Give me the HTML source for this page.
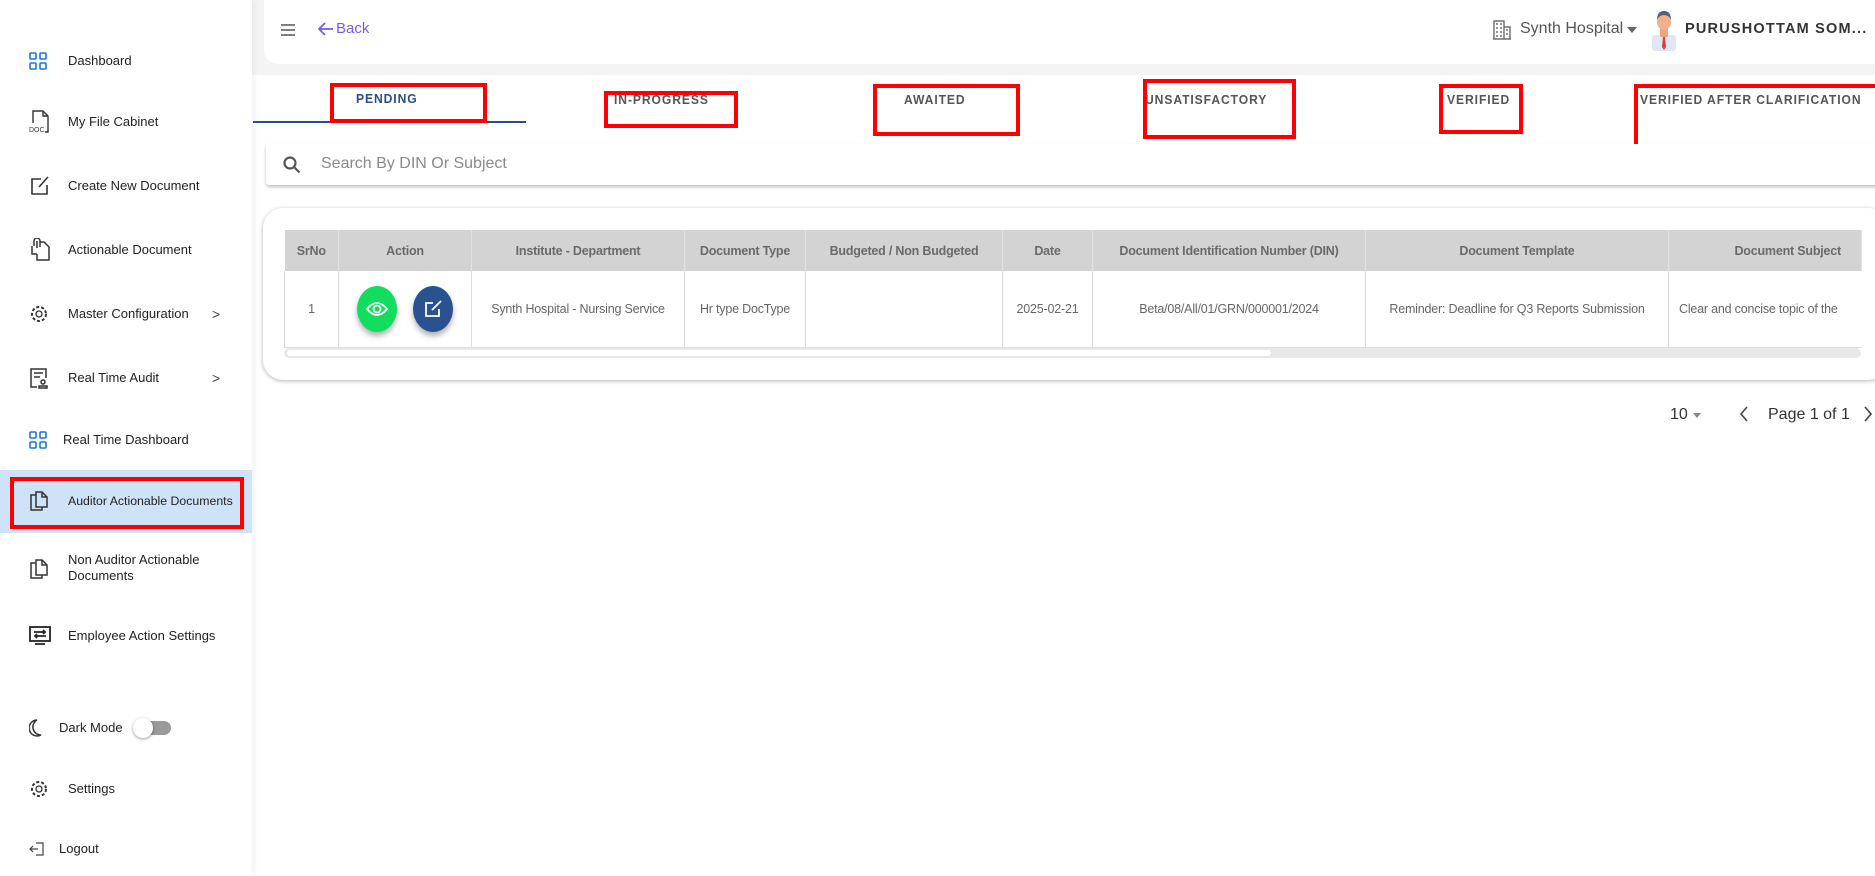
<!DOCTYPE html>
<html><head><meta charset="utf-8">
<style>
*{box-sizing:border-box;margin:0;padding:0}
html,body{width:1875px;height:876px;overflow:hidden;background:#fff;font-family:"Liberation Sans",sans-serif}
.abs{position:absolute}
#sb{left:0;top:0;width:252px;height:876px;background:#fff;box-shadow:2px 0 6px rgba(0,0,0,.06);z-index:2}
.it{position:absolute;left:0;width:252px;font-size:13px;color:#222;display:flex;align-items:center}
.it svg{position:absolute;left:29px}
.it span{position:absolute;left:68px;line-height:16px}
.chev{position:absolute;left:212px;color:#444;font-size:14px}
#top{left:252px;top:0;width:1623px;height:75px;background:#f4f4f4}
#topc{left:264px;top:0;width:1611px;height:64px;background:#fff;border-radius:0 0 0 14px}
.tab{position:absolute;top:91px;font-size:13px;letter-spacing:1px;color:#555;white-space:nowrap;font-weight:bold;transform:scaleX(.93);transform-origin:left}
.rb{position:absolute;border:4px solid #f00}
th{background:#d3d3d3;color:#6a6a6a;font-weight:bold;font-size:12.5px;letter-spacing:-.2px;height:41px;border-right:1px solid #e2e2e2;white-space:nowrap}
td{font-size:12.5px;letter-spacing:-.2px;color:#666;text-align:center;height:76px;border-right:1px solid #ddd;border-bottom:1px solid #ddd;white-space:nowrap;overflow:hidden}
table{border-collapse:collapse;table-layout:fixed}
</style></head><body>
<div id="sb" class="abs">
 <div class="it" style="top:52px;height:18px"><svg width="18" height="18" viewBox="0 0 18 18" fill="none" stroke="#1a73e8" stroke-width="1.6"><rect x="1" y="1" width="6" height="6" rx="1"/><rect x="11" y="1" width="6" height="6" rx="1"/><rect x="1" y="11" width="6" height="6" rx="1"/><rect x="11" y="11" width="6" height="6" rx="1"/></svg><span>Dashboard</span></div>
 <div class="it" style="top:110px;height:24px"><svg width="22" height="26" viewBox="0 0 22 26" fill="none" stroke="#333" stroke-width="1.4"><path d="M4 14V2h10l5 5v16h-3M14 2v5h5"/><text x="0" y="23" font-size="7" fill="#333" stroke="none" font-family="Liberation Sans">DOC</text></svg><span>My File Cabinet</span></div>
 <div class="it" style="top:175px;height:22px"><svg width="22" height="22" viewBox="0 0 22 22" fill="none" stroke="#333" stroke-width="1.6"><path d="M12 4H3v15h15v-9M10 12l9-10"/></svg><span>Create New Document</span></div>
 <div class="it" style="top:239px;height:22px"><svg width="22" height="24" viewBox="0 0 22 24" fill="none" stroke="#333" stroke-width="1.5"><path d="M5 8V3a3 3 0 0 1 6 0v6M8 3v7M11 4h4l5 5v13H8v-6M3 8v8h5"/></svg><span>Actionable Document</span></div>
 <div class="it" style="top:303px;height:22px"><svg width="20" height="20" viewBox="0 0 20 20" fill="none" stroke="#333" stroke-width="1.3"><circle cx="10" cy="10" r="3"/><circle cx="10" cy="10" r="7" stroke-dasharray="3 2" stroke-width="2"/></svg><span>Master Configuration</span><b class="chev" style="font-weight:normal">&gt;</b></div>
 <div class="it" style="top:367px;height:22px"><svg width="20" height="22" viewBox="0 0 20 22" fill="none" stroke="#333" stroke-width="1.5"><path d="M8 20H2V2h15v9M5 6h9M5 10h6"/><circle cx="14" cy="15" r="2"/><path d="M10 21h8v-2h-8z"/></svg><span>Real Time Audit</span><b class="chev" style="font-weight:normal">&gt;</b></div>
 <div class="it" style="top:431px;height:18px"><svg width="18" height="18" viewBox="0 0 18 18" fill="none" stroke="#1a73e8" stroke-width="1.6"><rect x="1" y="1" width="6" height="6" rx="1"/><rect x="11" y="1" width="6" height="6" rx="1"/><rect x="1" y="11" width="6" height="6" rx="1"/><rect x="11" y="11" width="6" height="6" rx="1"/></svg><span style="left:63px">Real Time Dashboard</span></div>
 <div class="abs" style="left:0;top:470px;width:252px;height:63px;background:#cfe3f8"></div>
 <div class="rb" style="left:10px;top:477px;width:234px;height:52px"></div>
 <div class="it" style="top:490px;height:22px"><svg width="20" height="22" viewBox="0 0 20 22" fill="none" stroke="#333" stroke-width="1.5"><path d="M7 5H2v15h11v-3M7 2h6l5 5v10H7zM13 2v5h5"/></svg><span style="font-size:12.3px">Auditor Actionable Documents</span></div>
 <div class="it" style="top:558px;height:22px"><svg width="20" height="22" viewBox="0 0 20 22" fill="none" stroke="#333" stroke-width="1.5"><path d="M7 5H2v15h11v-3M7 2h6l5 5v10H7zM13 2v5h5"/></svg><span style="top:-6px">Non Auditor Actionable<br>Documents</span></div>
 <div class="it" style="top:626px;height:20px"><svg width="22" height="20" viewBox="0 0 22 20" fill="none" stroke="#222" stroke-width="1.8"><rect x="1" y="1" width="20" height="14"/><path d="M6 18h10M5 6h10M17 10H7M14 4l2 2-2 2M8 8l-2 2 2 2"/></svg><span>Employee Action Settings</span></div>
 <div class="it" style="top:718px;height:20px"><svg width="18" height="20" viewBox="0 0 18 20" fill="none" stroke="#333" stroke-width="1.5"><path d="M14 17A8 8 0 0 1 10 2a8 8 0 1 0 4 15z" transform="translate(-2 0)"/></svg><span style="left:59px">Dark Mode</span>
  <div class="abs" style="left:136px;top:3px;width:35px;height:14px;border-radius:7px;background:#9a9a9a"></div>
  <div class="abs" style="left:133px;top:0;width:20px;height:20px;border-radius:50%;background:#fff;box-shadow:0 1px 3px rgba(0,0,0,.4)"></div></div>
 <div class="it" style="top:779px;height:20px"><svg width="20" height="20" viewBox="0 0 20 20" fill="none" stroke="#333" stroke-width="1.3"><circle cx="10" cy="10" r="3"/><circle cx="10" cy="10" r="7" stroke-dasharray="3 2" stroke-width="2"/></svg><span>Settings</span></div>
 <div class="it" style="top:840px;height:18px"><svg width="16" height="16" viewBox="0 0 16 16" fill="none" stroke="#444" stroke-width="1.2"><path d="M7 2h7v12H7M9 8H1M4 5L1 8l3 3"/></svg><span style="left:59px">Logout</span></div>
</div>

<div id="top" class="abs"></div>
<div id="topc" class="abs"></div>
<svg class="abs" style="left:280px;top:23px" width="16" height="14" viewBox="0 0 16 14" stroke="#555" stroke-width="1.6"><path d="M1 2h14M1 7h14M1 12h14"/></svg>
<div class="abs" style="left:318px;top:20px;font-size:15px;color:#7b5be6;display:flex;align-items:center"><svg width="16" height="14" viewBox="0 0 16 14" fill="none" stroke="#7b5be6" stroke-width="1.8"><path d="M15 7H2M7 1L1 7l6 6"/></svg><span style="margin-left:2px">Back</span></div>
<svg class="abs" style="left:1493px;top:20px" width="18" height="20" viewBox="0 0 18 20" fill="none" stroke="#555" stroke-width="1.2"><path d="M1 19V1h10v18M11 7h6v12M0 19h18M3 4h2M7 4h2M3 8h2M7 8h2M3 12h2M7 12h2M3 16h2M7 16h2M13 10h2M13 14h2"/></svg>
<div class="abs" style="left:1520px;top:20px;font-size:16px;color:#555">Synth Hospital</div>
<div class="abs" style="left:1627px;top:27px;border:5px solid transparent;border-top:6px solid #666"></div>
<svg class="abs" style="left:1649px;top:9px" width="30" height="42" viewBox="0 0 30 42"><rect x="3" y="26" width="24" height="16" rx="3" fill="#dfe8f2"/><rect x="11" y="19" width="8" height="9" fill="#e9a57e"/><ellipse cx="15" cy="13" rx="7" ry="8" fill="#f0b089"/><path d="M8 11q0-9 7-9t7 9q-2-5-7-5t-7 5z" fill="#55616f"/><path d="M14 28h2l1 10-2 3-2-3z" fill="#e53935"/></svg>
<div class="abs" style="left:1685px;top:21px;font-size:14.5px;color:#333;font-weight:bold;letter-spacing:1.2px">PURUSHOTTAM SOM...</div>

<div class="tab" style="left:356px;top:91px;color:#2b4c8c">PENDING</div>
<div class="abs" style="left:253px;top:121px;width:273px;height:2px;background:#2b4c8c"></div>
<div class="tab" style="left:614px;top:92px">IN-PROGRESS</div>
<div class="tab" style="left:904px;top:92px">AWAITED</div>
<div class="tab" style="left:1145px;top:92px">UNSATISFACTORY</div>
<div class="tab" style="left:1447px;top:92px">VERIFIED</div>
<div class="tab" style="left:1640px;top:92px">VERIFIED AFTER CLARIFICATION</div>
<div class="rb" style="left:330px;top:83px;width:157px;height:40px"></div>
<div class="rb" style="left:604px;top:91px;width:134px;height:37px"></div>
<div class="rb" style="left:873px;top:84px;width:147px;height:52px"></div>
<div class="rb" style="left:1143px;top:79px;width:153px;height:60px"></div>
<div class="rb" style="left:1439px;top:84px;width:84px;height:50px"></div>
<div class="rb" style="left:1634px;top:84px;width:250px;height:65px"></div>

<div class="abs" style="left:266px;top:144px;width:1615px;height:41px;background:#fff;border-radius:3px;box-shadow:0 2px 3px rgba(0,0,0,.25)"></div>
<svg class="abs" style="left:283px;top:156px" width="18" height="18" viewBox="0 0 18 18" fill="none" stroke="#555" stroke-width="2.2"><circle cx="7" cy="7" r="5.5"/><path d="M11 11l5.5 5.5"/></svg>
<div class="abs" style="left:321px;top:155px;font-size:16px;color:#8a8a8a">Search By DIN Or Subject</div>

<div class="abs" style="left:263px;top:208px;width:1625px;height:172px;background:#fff;border-radius:20px;box-shadow:0 1px 4px rgba(0,0,0,.3)"></div>
<table class="abs" style="left:284px;top:230px;width:1577px">
<colgroup><col style="width:54px"><col style="width:133px"><col style="width:213px"><col style="width:121px"><col style="width:197px"><col style="width:90px"><col style="width:273px"><col style="width:303px"><col style="width:193px"></colgroup>
<tr><th>SrNo</th><th>Action</th><th>Institute - Department</th><th>Document Type</th><th>Budgeted / Non Budgeted</th><th>Date</th><th>Document Identification Number (DIN)</th><th>Document Template</th><th style="text-align:right;padding-right:20px">Document Subject</th></tr>
<tr><td style="border-left:1px solid #ddd">1</td><td><div style="display:flex;justify-content:center;gap:16px">
<div style="width:40px;height:46px;border-radius:50%;background:#12dd5f;box-shadow:0 4px 6px rgba(0,0,0,.3);display:flex;align-items:center;justify-content:center"><svg width="22" height="16" viewBox="0 0 22 16" fill="none" stroke="#fff" stroke-width="1.8"><path d="M1 8q10-12 20 0q-10 12-20 0z"/><circle cx="11" cy="8" r="3.5"/></svg></div>
<div style="width:40px;height:46px;border-radius:50%;background:#2a5291;box-shadow:0 4px 6px rgba(0,0,0,.3);display:flex;align-items:center;justify-content:center"><svg width="18" height="18" viewBox="0 0 18 18" fill="none" stroke="#fff" stroke-width="1.8"><path d="M9 3H2v13h13V9M8 10l9-9"/></svg></div></div></td>
<td>Synth Hospital - Nursing Service</td><td>Hr type DocType</td><td></td><td>2025-02-21</td><td>Beta/08/All/01/GRN/000001/2024</td><td>Reminder: Deadline for Q3 Reports Submission</td><td style="text-align:left;padding-left:10px;border-right:none">Clear and concise topic of the</td></tr>
</table>
<div class="abs" style="left:284px;top:348px;width:1577px;height:10px;background:#e8e8e8;border-radius:5px"></div>
<div class="abs" style="left:287px;top:350px;width:984px;height:6px;background:#fff;border-radius:3px"></div>

<div class="abs" style="left:1670px;top:406px;font-size:16px;color:#333">10</div>
<div class="abs" style="left:1693px;top:413px;border:4px solid transparent;border-top:5px solid #888"></div>
<svg class="abs" style="left:1738px;top:405px" width="12" height="18" viewBox="0 0 12 18" fill="none" stroke="#444" stroke-width="1.6"><path d="M9 2L3 9l6 7"/></svg>
<div class="abs" style="left:1768px;top:406px;font-size:16px;color:#333">Page 1 of 1</div>
<svg class="abs" style="left:1862px;top:405px" width="12" height="18" viewBox="0 0 12 18" fill="none" stroke="#444" stroke-width="1.6"><path d="M3 2l6 7-6 7"/></svg>
</body></html>
